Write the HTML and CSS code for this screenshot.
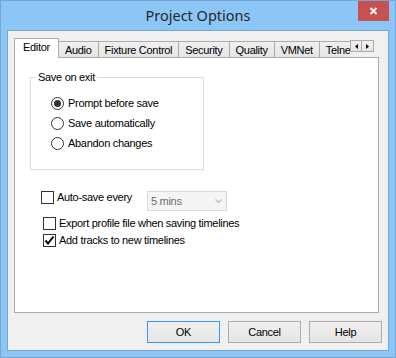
FILE: index.html
```html
<!DOCTYPE html>
<html lang="en">
<head>
  <meta charset="UTF-8">
  <meta name="viewport" content="width=device-width, initial-scale=1.0">
  <title>Project Options</title>
  <link rel="stylesheet" href="styles.css">
</head>
<body>
  <div class="window">
    <header class="titlebar">
      <h1 class="title">Project Options</h1>
      <svg class="close-btn" width="31" height="20" viewBox="0 0 31 20">
        <rect width="31" height="20" fill="#c75050"/>
        <path d="M12.5 7 L18.5 13 M18.5 7 L12.5 13" stroke="#ffffff" stroke-width="1.8"/>
      </svg>
    </header>

    <section class="client">
      <div class="tabs">
        <div class="tabstrip">
          <div class="tab active">Editor</div>
          <div class="tab">Audio</div>
          <div class="tab">Fixture Control</div>
          <div class="tab">Security</div>
          <div class="tab">Quality</div>
          <div class="tab">VMNet</div>
          <div class="tab">Telnet</div>
        </div>
        <div class="tab-scroll">
          <span class="scroll-btn"><svg width="3" height="5" viewBox="0 0 3 5"><path d="M3 0 V5 L0 2.5 Z"/></svg></span>
          <span class="scroll-btn"><svg width="3" height="5" viewBox="0 0 3 5"><path d="M0 0 V5 L3 2.5 Z"/></svg></span>
        </div>
      </div>

      <div class="panel">
        <fieldset class="group">
          <legend>Save on exit</legend>
          <label class="radio"><span class="radio-mark checked"></span>Prompt before save</label>
          <label class="radio"><span class="radio-mark"></span>Save automatically</label>
          <label class="radio"><span class="radio-mark"></span>Abandon changes</label>
        </fieldset>

        <div class="option autosave">
          <span class="check"></span>
          <span class="option-text">Auto-save every</span>
          <div class="combo">
            <span>5 mins</span>
            <svg width="7" height="4" viewBox="0 0 7 4"><path d="M0.5 0.5 L3.5 3.5 L6.5 0.5" fill="none" stroke="#bdbdbd" stroke-width="1.2"/></svg>
          </div>
        </div>
        <div class="option export">
          <span class="check"></span>
          <span class="option-text">Export profile file when saving timelines</span>
        </div>
        <div class="option tracks">
          <span class="check">
            <svg width="11" height="11" viewBox="0 0 11 11"><path d="M1.5 5.5 L4 8.5 L9.5 1.5" fill="none" stroke="#000" stroke-width="2"/></svg>
          </span>
          <span class="option-text">Add tracks to new timelines</span>
        </div>
      </div>

      <div class="buttons">
        <button type="button" class="btn default">OK</button>
        <button type="button" class="btn">Cancel</button>
        <button type="button" class="btn">Help</button>
      </div>
    </section>
  </div>
</body>
</html>
```

FILE: styles.css
```css
body {
  margin: 0;
  padding: 0;
  font-family: "Liberation Sans", Arial, sans-serif;
  font-size: 11px;
  letter-spacing: -0.3px;
  color: #000;
}

.window {
  width: 396px;
  height: 358px;
  box-sizing: border-box;
  border: 1px solid #78a6d3;
  background-color: #8cc6f7;
  display: flex;
  flex-direction: column;
}

.titlebar {
  height: 29px;
  display: flex;
  align-items: flex-start;
  padding-left: 37px;
}

.title {
  flex: 1;
  margin: 0;
  text-align: center;
  font-family: "Noto Sans", sans-serif;
  font-weight: normal;
  font-size: 14.5px;
  letter-spacing: 0;
  line-height: 29px;
  color: #262626;
}

.close-btn {
  flex-shrink: 0;
  display: block;
  margin-right: 6px;
}

.client {
  flex: 1;
  margin: 0 6px 6px 6px;
  border: 1px solid #78a6d3;
  background-color: #f0f0f0;
  display: flex;
  flex-direction: column;
}

/* tab header */
.tabs {
  height: 26px;
  display: flex;
  padding: 0 14px 0 6px;
}

.tabstrip {
  flex: 1;
  display: flex;
  align-items: flex-end;
  overflow: hidden;
  padding-bottom: 1px;
  margin-bottom: -1px;
  position: relative;
  z-index: 1;
}

.tab {
  flex-shrink: 0;
  box-sizing: border-box;
  height: 16px;
  padding: 2px 6px 0 6px;
  margin-left: -1px;
  line-height: 13px;
  border: 1px solid #acacac;
  border-bottom: none;
  background: linear-gradient(#f0f0f0, #e5e5e5);
  white-space: nowrap;
}

.tab:first-child {
  margin-left: 0;
}

.tab.active {
  height: 20px;
  margin-bottom: -1px;
  padding: 2px 8px 0 8px;
  background: #fff;
  position: relative;
}

.tab-scroll {
  display: flex;
  margin-top: 9px;
  align-self: flex-start;
}

.scroll-btn {
  width: 12px;
  height: 12px;
  box-sizing: border-box;
  border: 1px solid #acacac;
  background: linear-gradient(#f0f0f0, #e5e5e5);
  display: flex;
  align-items: center;
  justify-content: center;
}

.scroll-btn + .scroll-btn {
  border-left: none;
}

/* tab page */
.panel {
  box-sizing: border-box;
  height: 256px;
  margin: 0 9px 0 6px;
  padding: 13px 0 0 15px;
  border: 1px solid #acacac;
  background-color: #fff;
}

.group {
  box-sizing: border-box;
  width: 174px;
  min-width: 0;
  margin: 0;
  padding: 9px 0 16px 20px;
  border: 1px solid #dcdcdc;
}

.group legend {
  margin-left: -15px;
  padding: 0 2px;
  line-height: 13px;
}

.radio {
  height: 20px;
  display: flex;
  align-items: center;
  gap: 4px;
}

.radio-mark {
  width: 13px;
  height: 13px;
  box-sizing: border-box;
  border: 1px solid #333;
  border-radius: 50%;
  background-color: #fff;
  display: flex;
  align-items: center;
  justify-content: center;
}

.radio-mark.checked::after {
  content: "";
  width: 7px;
  height: 7px;
  border-radius: 50%;
  background-color: #333;
}

.option {
  height: 16px;
  display: flex;
  align-items: center;
  gap: 3px;
  padding-left: 13px;
}

.option.autosave {
  margin-top: 19px;
  padding-left: 11px;
}

.option.export {
  margin-top: 10px;
}

.option.tracks {
  margin-top: 1px;
}

.check {
  width: 13px;
  height: 13px;
  box-sizing: border-box;
  border: 1px solid #333;
  background-color: #fff;
  display: flex;
  align-items: center;
  justify-content: center;
}

.combo {
  align-self: flex-start;
  margin-top: 2px;
  margin-left: 12px;
  width: 80px;
  height: 20px;
  box-sizing: border-box;
  padding: 0 4px 0 3px;
  border: 1px solid #d9d9d9;
  background-color: #f5f5f5;
  color: #6d6d6d;
  display: flex;
  align-items: center;
  justify-content: space-between;
}

/* dialog buttons */
.buttons {
  display: flex;
  justify-content: flex-end;
  gap: 8px;
  margin-top: 8px;
  padding-right: 6px;
}

.btn {
  width: 73px;
  height: 22px;
  padding: 0;
  font-family: inherit;
  font-size: 11px;
  letter-spacing: -0.3px;
  color: #000;
  border: 1px solid #acacac;
  background: linear-gradient(#f0f0f0, #e5e5e5);
}

.btn.default {
  border-color: #3399ff;
}
```
